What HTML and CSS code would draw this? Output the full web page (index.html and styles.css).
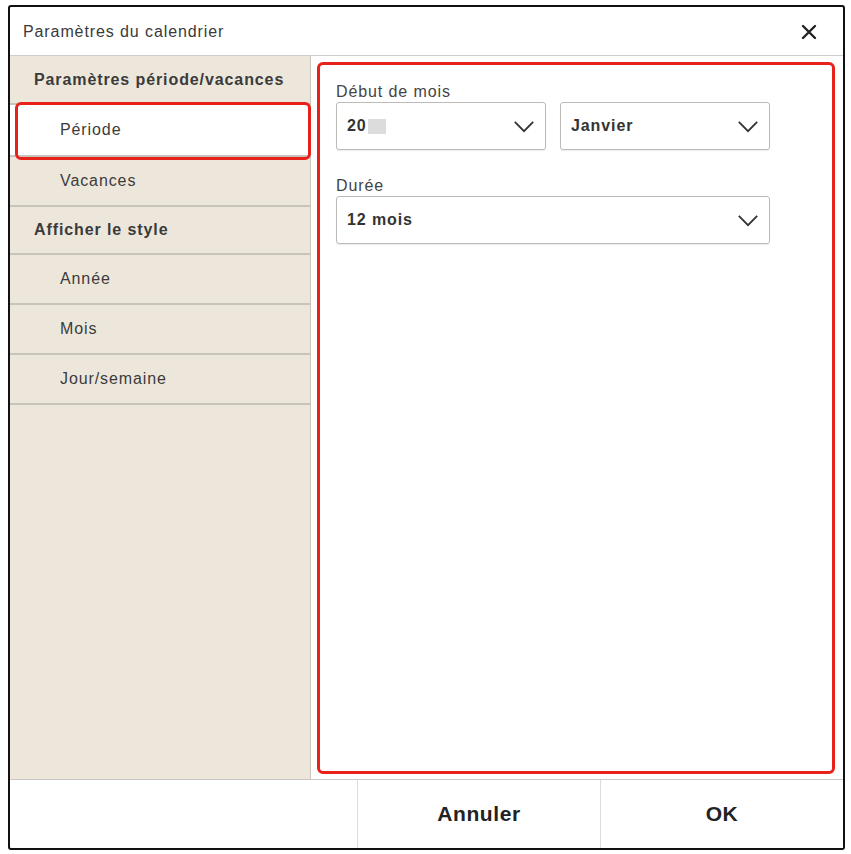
FILE: index.html
```html
<!DOCTYPE html>
<html lang="fr">

<head>
    <meta charset="UTF-8">
    <meta name="viewport" content="width=device-width, initial-scale=1.0">
    <title>Paramètres du calendrier</title>
    <link rel="stylesheet" href="styles.css">
</head>

<body>
    <div class="dialog">
        <div class="dialog-head">
            <span class="dialog-title">Paramètres du calendrier</span>
            <button class="close-btn" aria-label="Fermer">
                <svg width="16" height="16" viewBox="0 0 16 16">
                    <path d="M2 2 L14 14 M14 2 L2 14" stroke="#222" stroke-width="2.4" stroke-linecap="round" />
                </svg>
            </button>
        </div>

        <div class="dialog-body">
            <ul class="side-menu">
                <li class="menu-section">Paramètres période/vacances</li>
                <li class="menu-item selected">Période</li>
                <li class="menu-item">Vacances</li>
                <li class="menu-section">Afficher le style</li>
                <li class="menu-item">Année</li>
                <li class="menu-item">Mois</li>
                <li class="menu-item">Jour/semaine</li>
            </ul>

            <div class="content">
                <div class="panel">
                    <div class="field">
                        <label class="field-label">Début de mois</label>
                        <div class="field-row">
                            <div class="select short">
                                <span class="select-value">20<span class="masked"></span></span>
                                <svg class="chevron" width="24" height="14" viewBox="0 0 24 14">
                                    <path d="M2 2 L12 12 L22 2" fill="none" stroke="#333" stroke-width="2" />
                                </svg>
                            </div>
                            <div class="select short">
                                <span class="select-value">Janvier</span>
                                <svg class="chevron" width="24" height="14" viewBox="0 0 24 14">
                                    <path d="M2 2 L12 12 L22 2" fill="none" stroke="#333" stroke-width="2" />
                                </svg>
                            </div>
                        </div>
                    </div>
                    <div class="field">
                        <label class="field-label">Durée</label>
                        <div class="select wide">
                            <span class="select-value">12 mois</span>
                            <svg class="chevron" width="24" height="14" viewBox="0 0 24 14">
                                <path d="M2 2 L12 12 L22 2" fill="none" stroke="#333" stroke-width="2" />
                            </svg>
                        </div>
                    </div>
                </div>
            </div>
        </div>

        <div class="dialog-foot">
            <div class="foot-space"></div>
            <button class="foot-btn">Annuler</button>
            <button class="foot-btn">OK</button>
        </div>
    </div>
</body>

</html>
```

FILE: styles.css
```css
* {
    padding: 0;
    margin: 0;
    box-sizing: border-box;
}

body {
    background-color: #fff;
    font-family: "Liberation Sans", Arial, sans-serif;
    color: #333;
    letter-spacing: 0.9px;
}

.dialog {
    width: 837px;
    height: 845px;
    margin: 5px 0 0 8px;
    border: 2px solid #111;
    border-radius: 3px;
    display: flex;
    flex-direction: column;
    background-color: #fff;
}

/* barre de titre */
.dialog-head {
    height: 49px;
    display: flex;
    align-items: center;
    justify-content: space-between;
    padding: 2px 26px 0 13px;
    border-bottom: 1px solid #cfcdc9;
}

.dialog-title {
    font-size: 16px;
    color: #3a3a3a;
}

.close-btn {
    border: none;
    background: none;
    display: flex;
}

/* corps : menu + contenu */
.dialog-body {
    flex: 1;
    display: flex;
    min-height: 0;
}

.side-menu {
    list-style: none;
    width: 301px;
    background-color: #ede7db;
    border-right: 1px solid #c9c5bd;
}

.menu-section,
.menu-item {
    height: 50px;
    display: flex;
    align-items: center;
    font-size: 16px;
    color: #3b3b3b;
    border-bottom: 2px solid #c9c4bb;
}

.menu-section {
    height: 48px;
    padding-left: 24px;
    font-weight: bold;
}

.menu-section:first-child {
    height: 49px;
}

.menu-item {
    padding-left: 50px;
}

.menu-item.selected {
    position: relative;
    height: 52px;
    background-color: #fff;
}

/* cadre rouge autour de l'élément sélectionné */
.menu-item.selected::after {
    content: "";
    position: absolute;
    left: 5px;
    right: -1px;
    top: -3px;
    bottom: -5px;
    border: 3px solid #e8211b;
    border-radius: 6px;
}

.content {
    flex: 1;
    padding: 6px 8px 5px 6px;
}

.panel {
    height: 100%;
    border: 3px solid #e8211b;
    border-radius: 6px;
    padding: 18px 16px;
}

.field {
    margin-bottom: 27px;
}

.field-label {
    display: block;
    font-size: 16px;
    line-height: 18px;
    color: #444;
    margin-bottom: 1px;
}

.field-row {
    display: flex;
    gap: 14px;
}

.select {
    height: 48px;
    border: 1px solid #bdbbb8;
    border-radius: 3px;
    display: flex;
    align-items: center;
    justify-content: space-between;
    padding: 0 10px 0 10px;
    box-shadow: 0 1px 1px rgba(0, 0, 0, 0.08);
}

.select.short {
    width: 210px;
}

.select.wide {
    width: 434px;
}

.select-value {
    font-size: 16px;
    font-weight: bold;
    color: #333;
    display: flex;
    align-items: center;
}

.masked {
    display: inline-block;
    width: 18px;
    height: 15px;
    margin-left: 1px;
    background-color: #dcdcdc;
}

.chevron {
    width: 22px;
    height: 13px;
}

/* pied : boutons */
.dialog-foot {
    height: 69px;
    display: grid;
    grid-template-columns: 347px 243px 1fr;
    border-top: 1px solid #c9c7c3;
}

.foot-btn {
    border: none;
    border-left: 1px solid #dcdcdc;
    background: #fff;
    font-family: "Liberation Sans", Arial, sans-serif;
    font-size: 21px;
    font-weight: bold;
    letter-spacing: 0.6px;
    color: #222;
}
```
